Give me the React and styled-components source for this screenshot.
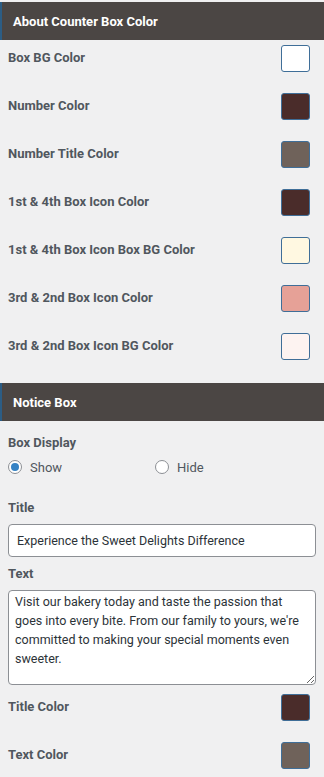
import React, { useState } from "react";
import styled, { createGlobalStyle } from "styled-components";

const GlobalStyle = createGlobalStyle`
  html, body {
    margin: 0;
    padding: 0;
    background: #f0f0f1;
  }
  body {
    font-family: Roboto, "Liberation Sans", Arial, sans-serif;
    color: #50575e;
  }
`;

const Panel = styled.div`
  width: 324px;
  padding-top: 2px;
  background: #f0f0f1;
`;

const SectionHeader = styled.div`
  height: 38px;
  display: flex;
  align-items: center;
  padding-left: 11px;
  background: #4b4644;
  border-left: 2px solid #2c5d85;
  color: #fff;
  font-size: 13px;
  font-weight: 700;
`;

const SwatchList = styled.div`
  display: flex;
  flex-direction: column;
  gap: 22px;
  padding: 5px 14px 24px 8px;
`;

const ColorRow = styled.div`
  display: flex;
  align-items: center;
  justify-content: space-between;
  height: 26px;
`;

const Label = styled.span`
  font-size: 13px;
  font-weight: 700;
  color: #50575e;
  line-height: 18px;
`;

const Swatch = styled.button`
  width: 29px;
  height: 27px;
  padding: 0;
  border: 1px solid #3f6e98;
  border-radius: 3px;
  background: ${(p) => p.color};
  box-sizing: border-box;
`;

const NoticeBody = styled.div`
  padding: 11px 8px 0 8px;
`;

const RadioGroup = styled.div`
  display: grid;
  grid-template-columns: 147px auto;
  margin-top: 6px;
`;

const RadioOption = styled.label`
  display: flex;
  align-items: center;
  gap: 8px;
  font-size: 13px;
  color: #50575e;
  height: 18px;
`;

const RadioCircle = styled.span`
  width: 14px;
  height: 14px;
  border-radius: 50%;
  border: 1px solid #8c8f94;
  background: #fff;
  box-sizing: border-box;
  display: flex;
  align-items: center;
  justify-content: center;
  &::after {
    content: "";
    width: 8px;
    height: 8px;
    border-radius: 50%;
    background: ${(p) => (p.checked ? "#3582c4" : "transparent")};
  }
`;

const FieldLabel = styled(Label)`
  display: block;
  margin-top: ${(p) => p.top || 0}px;
  margin-bottom: 7px;
`;

const TextInput = styled.input`
  display: block;
  width: 100%;
  height: 33px;
  box-sizing: border-box;
  border: 1px solid #8c8f94;
  border-radius: 4px;
  padding: 0 8px;
  font-family: Roboto, "Liberation Sans", Arial, sans-serif;
  font-size: 12.5px;
  color: #2c3338;
  background: #fff;
`;

const TextArea = styled.textarea`
  display: block;
  width: 100%;
  height: 95px;
  box-sizing: border-box;
  border: 1px solid #8c8f94;
  border-radius: 4px;
  padding: 1px 6px;
  font-family: Roboto, "Liberation Sans", Arial, sans-serif;
  font-size: 12.5px;
  line-height: 19px;
  color: #2c3338;
  background: #fff;
  resize: vertical;
`;

const NoticeSwatches = styled(SwatchList)`
  padding: 9px 6px 10px 0;
`;

const counterColors = [
  ["Box BG Color", "#ffffff"],
  ["Number Color", "#4a2c2a"],
  ["Number Title Color", "#6f625a"],
  ["1st & 4th Box Icon Color", "#4a2c2a"],
  ["1st & 4th Box Icon Box BG Color", "#fff8e1"],
  ["3rd & 2nd Box Icon Color", "#e6a197"],
  ["3rd & 2nd Box Icon BG Color", "#fdf3f1"],
];

const noticeColors = [
  ["Title Color", "#4a2c2a"],
  ["Text Color", "#6f625a"],
];

export default function App() {
  const [display, setDisplay] = useState("show");

  return (
    <>
      <GlobalStyle />
      <Panel>
        <SectionHeader>About Counter Box Color</SectionHeader>
        <SwatchList>
          {counterColors.map(([label, color]) => (
            <ColorRow key={label}>
              <Label>{label}</Label>
              <Swatch color={color} />
            </ColorRow>
          ))}
        </SwatchList>

        <SectionHeader>Notice Box</SectionHeader>
        <NoticeBody>
          <Label>Box Display</Label>
          <RadioGroup>
            <RadioOption onClick={() => setDisplay("show")}>
              <RadioCircle checked={display === "show"} />
              Show
            </RadioOption>
            <RadioOption onClick={() => setDisplay("hide")}>
              <RadioCircle checked={display === "hide"} />
              Hide
            </RadioOption>
          </RadioGroup>

          <FieldLabel top={23}>Title</FieldLabel>
          <TextInput defaultValue="Experience the Sweet Delights Difference" />

          <FieldLabel top={8}>Text</FieldLabel>
          <TextArea defaultValue="Visit our bakery today and taste the passion that goes into every bite. From our family to yours, we're committed to making your special moments even sweeter." />

          <NoticeSwatches>
            {noticeColors.map(([label, color]) => (
              <ColorRow key={label}>
                <Label>{label}</Label>
                <Swatch color={color} />
              </ColorRow>
            ))}
          </NoticeSwatches>
        </NoticeBody>
      </Panel>
    </>
  );
}
